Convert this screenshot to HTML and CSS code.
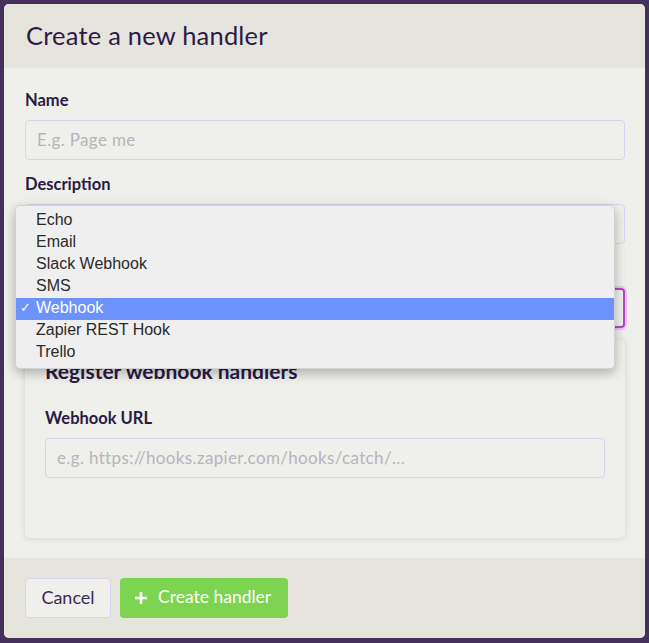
FILE: index.html
```html
<!DOCTYPE html>
<html>
<head>
<meta charset="utf-8">
<link rel="stylesheet" href="styles.css">
</head>
<body>
<div class="modal">
  <div class="modal-header">
    <h1 class="modal-title">Create a new handler</h1>
  </div>
  <div class="modal-body">
    <div class="field">
      <label class="label">Name</label>
      <div class="input placeholder">E.g. Page me</div>
    </div>
    <div class="field">
      <label class="label">Description</label>
      <div class="input placeholder"></div>
    </div>
    <div class="field">
      <label class="label">Type</label>
      <div class="input select-focus"></div>
    </div>
    <div class="card">
      <h2 class="card-title">Register webhook handlers</h2>
      <label class="label">Webhook URL</label>
      <div class="input placeholder">e.g. https://hooks.zapier.com/hooks/catch/...</div>
    </div>

    <ul class="dropdown">
      <li class="opt">Echo</li>
      <li class="opt">Email</li>
      <li class="opt">Slack Webhook</li>
      <li class="opt">SMS</li>
      <li class="opt selected"><span class="check">✓</span>Webhook</li>
      <li class="opt">Zapier REST Hook</li>
      <li class="opt">Trello</li>
    </ul>
  </div>
  <div class="modal-footer">
    <button class="btn btn-cancel">Cancel</button>
    <button class="btn btn-primary">
      <svg class="plus" width="14" height="14" viewBox="0 0 14 14"><path d="M7 1v12M1 7h12" stroke="#fff" stroke-width="2.6" stroke-linecap="butt"/></svg>
      Create handler
    </button>
  </div>
</div>
</body>
</html>
```
FILE: styles.css
```css
* { box-sizing: border-box; }
html, body { margin: 0; padding: 0; }
body {
  background: #45305c;
  width: 649px;
  height: 643px;
  padding: 4px 4px 5px 4px;
  font-family: "Lato", "Open Sans", sans-serif;
  color: #2b1a45;
}
.modal {
  width: 641px;
  height: 634px;
  background: #efefeb;
  border-radius: 5px;
  overflow: hidden;
  display: flex;
  flex-direction: column;
}
.modal-header {
  background: #e5e5de;
  height: 64px;
  padding: 0 22px 2px 22px;
  display: flex;
  align-items: center;
}
.modal-title {
  margin: 0;
  font-weight: 400;
  font-size: 25.5px;
  color: #2e1a47;
  letter-spacing: 0.2px;
}
.modal-body {
  position: relative;
  padding: 22px 20px 20px 21px;
  flex: 1;
  display: flex;
  flex-direction: column;
}
.field { display: flex; flex-direction: column; margin-bottom: 14px; }
.label {
  display: block;
  font-size: 16.5px;
  font-weight: 700;
  line-height: 20px;
  height: 20px;
  margin-bottom: 10px;
  color: #2b1a45;
}
.input {
  height: 40px;
  border: 1px solid #ddd0f0;
  border-radius: 4px;
  background: #efefeb;
  padding: 0 11px 1px 11px;
  display: flex;
  align-items: center;
  font-size: 17px;
  letter-spacing: 0.35px;
}
.placeholder { color: #b7b4bc; }
.select-focus {
  border: 2px solid #b941cf;
  box-shadow: 0 0 0 2px rgba(185, 65, 207, 0.22);
}
.field:nth-child(3) { margin-bottom: 12px; }
.card {
  height: 198px;
  background: #efefeb;
  border-radius: 5px;
  box-shadow: 0 1px 6px rgba(0,0,0,0.12);
  padding: 20px 20px 0 20px;
}
.card-title {
  margin: 0 0 26px 0;
  font-size: 21px;
  font-weight: 700;
  line-height: 22px;
  color: #2b1a45;
}
.modal-footer {
  background: #e5e5de;
  height: 80px;
  padding: 20px 21px;
  display: flex;
  gap: 9px;
}
.btn {
  height: 40px;
  border-radius: 4px;
  font-family: "Lato", "Open Sans", sans-serif;
  font-size: 17.5px;
  padding: 0 15px 3px 15px;
  display: flex;
  align-items: center;
  cursor: pointer;
}
.btn-cancel {
  width: 86px;
  justify-content: center;
  background: #efefeb;
  border: 1px solid #ddd0f0;
  color: #3a2a55;
  font-size: 18px;
}
.btn-primary {
  width: 168px;
  background: #7cd451;
  border: none;
  color: #fff;
  gap: 10px;
  padding-left: 14px;
}
.plus { margin-top: 2px; }
.dropdown {
  position: absolute;
  left: 11px;
  top: 137px;
  width: 600px;
  margin: 0;
  padding: 4px 0 4px 0;
  list-style: none;
  background: #efefef;
  border: 1px solid rgba(0,0,0,0.12);
  border-radius: 5px;
  box-shadow: 0 4px 12px rgba(0,0,0,0.28);
  font-family: "Liberation Sans", Arial, sans-serif;
  font-size: 16px;
  color: #2a2a2a;
}
.opt {
  height: 22px;
  line-height: 20px;
  padding-left: 20px;
  position: relative;
}
.opt.selected { background: #6b93fb; color: #fff; }
.check {
  position: absolute;
  left: 4px;
  top: 0;
  font-size: 13px;
}
```
